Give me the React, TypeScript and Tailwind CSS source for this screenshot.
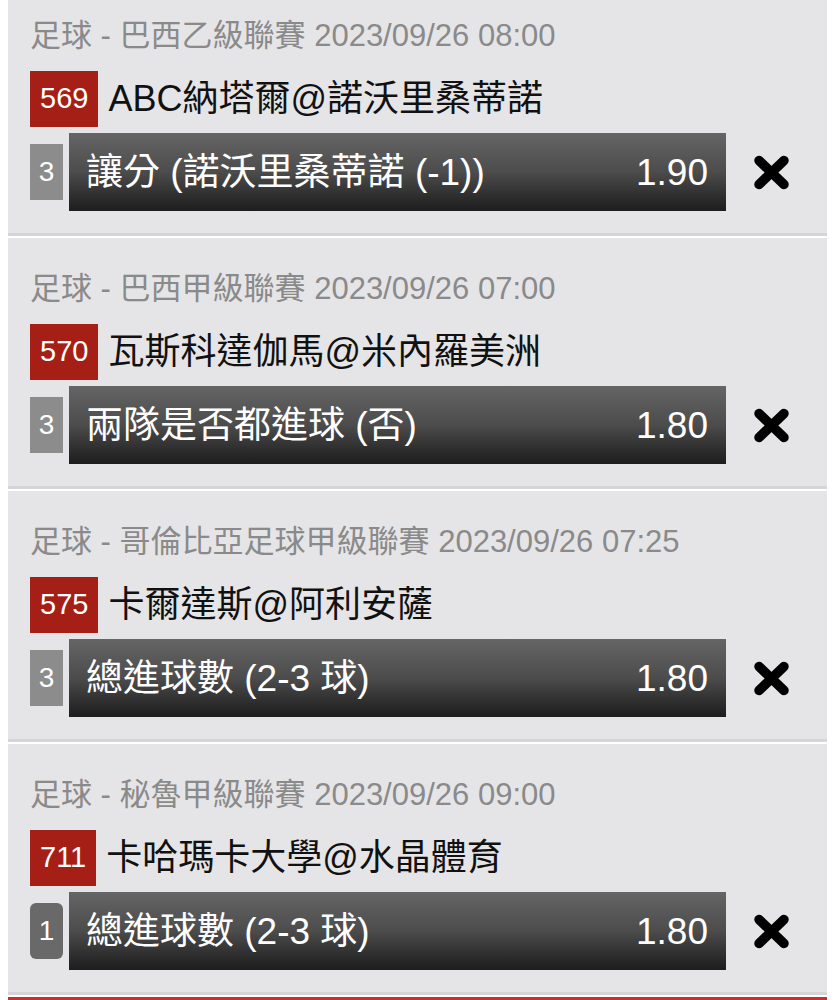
// Bet slip list — four selections with odds and remove buttons

type Bet = {
  league: string;
  code: string;
  match: string;
  count: string;
  pick: string;
  odds: string;
  last?: boolean;
};

const bets: Bet[] = [
  {
    league: '足球 - 巴西乙級聯賽 2023/09/26 08:00',
    code: '569',
    match: 'ABC納塔爾@諾沃里桑蒂諾',
    count: '3',
    pick: '讓分 (諾沃里桑蒂諾 (-1))',
    odds: '1.90',
  },
  {
    league: '足球 - 巴西甲級聯賽 2023/09/26 07:00',
    code: '570',
    match: '瓦斯科達伽馬@米內羅美洲',
    count: '3',
    pick: '兩隊是否都進球 (否)',
    odds: '1.80',
  },
  {
    league: '足球 - 哥倫比亞足球甲級聯賽 2023/09/26 07:25',
    code: '575',
    match: '卡爾達斯@阿利安薩',
    count: '3',
    pick: '總進球數 (2-3 球)',
    odds: '1.80',
  },
  {
    league: '足球 - 秘魯甲級聯賽 2023/09/26 09:00',
    code: '711',
    match: '卡哈瑪卡大學@水晶體育',
    count: '1',
    pick: '總進球數 (2-3 球)',
    odds: '1.80',
    last: true,
  },
];

function RemoveIcon() {
  return (
    <svg width="37" height="35" viewBox="0 0 37 35" aria-hidden="true">
      <path
        d="M6 5.5 L31 29.5 M31 5.5 L6 29.5"
        stroke="#000"
        strokeWidth="9.5"
        strokeLinecap="round"
        fill="none"
      />
    </svg>
  );
}

function BetCard({ bet }: { bet: Bet }) {
  return (
    <div className="h-[251px] bg-[#e5e5e7] border-b-[3px] border-[#d5d5d7] pl-[22px] flex flex-col">
      {/* League + kickoff */}
      <div className="mt-[33px] text-[31px] leading-[36px] text-[#8a8a8a] whitespace-nowrap">
        {bet.league}
      </div>

      {/* Match code + teams */}
      <div className="mt-[17px] flex items-center gap-[10px]">
        <span className="h-[56px] px-[10px] bg-[#a61f17] text-white text-[29px] flex items-center">
          {bet.code}
        </span>
        <span className="text-[36px] leading-none text-[#111] whitespace-nowrap">{bet.match}</span>
      </div>

      {/* Selection bar */}
      <div className="mt-[6px] flex items-center">
        <span
          className={
            bet.last
              ? 'w-[33px] h-[56px] bg-[#696969] rounded-md text-white text-[28px] flex items-center justify-center'
              : 'w-[33px] h-[56px] bg-[#8c8c8c] text-white text-[28px] flex items-center justify-center'
          }
        >
          {bet.count}
        </span>
        <div className="ml-[6px] w-[657px] h-[78px] bg-linear-to-b from-[#656565] via-[#4c4c4c] to-[#1d1d1d] flex items-center justify-between pl-[17px] pr-[18px] text-white">
          <span className="text-[37px] leading-none whitespace-nowrap">{bet.pick}</span>
          <span className="text-[37px] leading-none">{bet.odds}</span>
        </div>
        <button className="ml-[27px] flex items-center justify-center">
          <RemoveIcon />
        </button>
      </div>
    </div>
  );
}

export default function App() {
  return (
    <div className="h-[1000px] bg-white overflow-hidden font-['Liberation_Sans','Noto_Sans_CJK_TC',sans-serif]">
      <div className="-mt-[15px] pl-2 pr-3 flex flex-col gap-[2px]">
        {bets.map((bet) => (
          <BetCard key={bet.code} bet={bet} />
        ))}
        <div className="h-[40px] bg-[#e5e5e7] border-t-[3px] border-[#c8302a]" />
      </div>
    </div>
  );
}
